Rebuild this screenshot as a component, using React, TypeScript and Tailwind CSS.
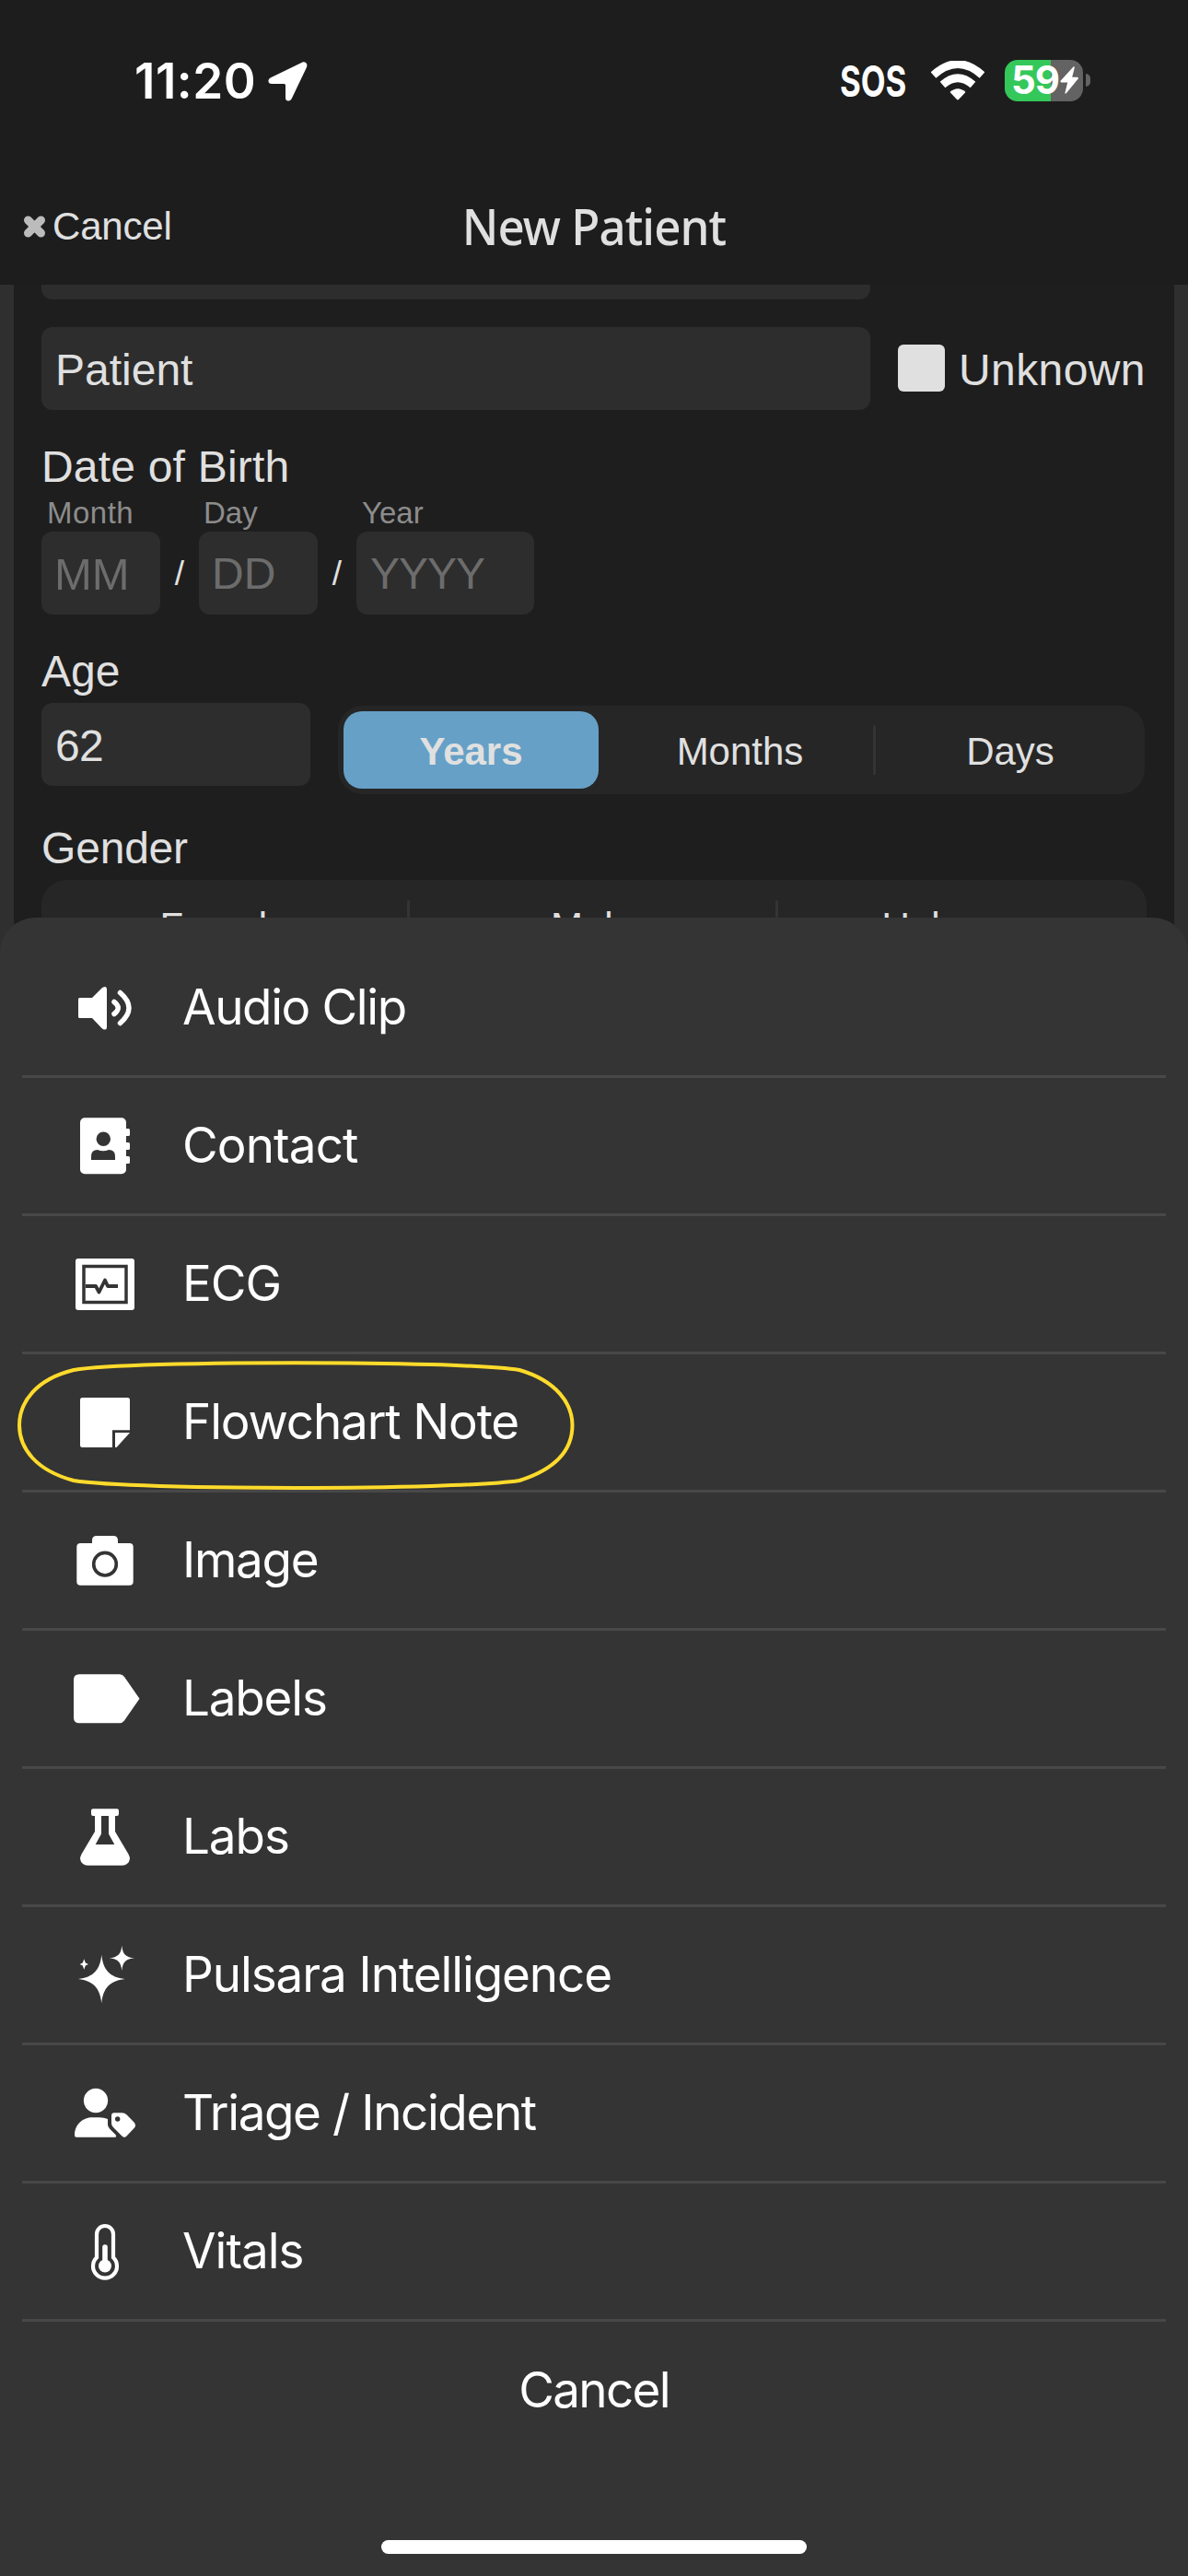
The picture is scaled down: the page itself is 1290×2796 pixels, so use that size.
import React from "react";

interface MenuItemProps {
  label: string;
  tracking: string;
  icon: React.ReactNode;
}

interface SegmentProps {
  label: string;
  active?: boolean;
  divider?: boolean;
}

const AudioIcon = () => (
  <>
    <path d="M12.5 28H26L36.500 17.5Q38 16 40 16Q42 16 42 18.5V60Q42 62.5 40 62.5Q38 62.5 36.5 61L26 50H12.5Q11 50 11 48.5V29.5Q11 28 12.5 28Z" />
    <path
      d="M50 32.500Q58.500 39 50 45.500M56.500 22.500Q75.500 39 56.500 55.500"
      fill="none"
      stroke="white"
      strokeWidth="5.5"
      strokeLinecap="round"
    />
  </>
);

const ContactIcon = () => (
  <>
    <rect x="13" y="8.3" width="50" height="61" rx="5" />
    <rect x="60" y="20" width="7" height="8" rx="1.5" />
    <rect x="60" y="35" width="7" height="8" rx="1.5" />
    <rect x="60" y="50" width="7" height="8" rx="1.5" />
    <circle cx="38.3" cy="31.3" r="7.7" fill="#343434" />
    <path d="M25 54V50Q25 43 32 43Q38 45.5 44 43Q51 43 51 50V54Z" fill="#343434" />
  </>
);

const EcgIcon = () => (
  <>
    <rect x="8" y="11" width="64" height="56" rx="3" />
    <rect x="17" y="19.5" width="46" height="39" fill="none" stroke="#343434" strokeWidth="3.5" />
    <path
      d="M19 41H30L33.5 47.5L40 34.5L43 41H54"
      fill="none"
      stroke="#343434"
      strokeWidth="3.8"
      strokeLinejoin="round"
    />
  </>
);

const NoteIcon = () => (
  <>
    <path d="M15.5 12H64.5Q67 12 67 14.5V47.3H48V66H15.5Q13 66 13 63.5V14.5Q13 12 15.5 12Z" />
    <path d="M51 50H67L53 65.5Q52 66 51 66Z" />
  </>
);

const CameraIcon = () => (
  <>
    <path d="M13.5 20H26V17Q26 12 31 12H49Q54 12 54 17V20H66.5Q70.7 20 70.7 24V61.7Q70.7 65.7 66.5 65.7H13.5Q9.3 65.7 9.3 61.7V24Q9.3 20 13.5 20Z" />
    <circle cx="40" cy="42.7" r="12.3" fill="none" stroke="#343434" strokeWidth="3.6" />
  </>
);

const LabelIcon = () => (
  <path d="M12 12.3H56Q59 12.3 61 15L77.5 38.8L61 62.6Q59 65.3 56 65.3H12Q6 65.3 6 59.3V18.3Q6 12.3 12 12.3Z" />
);

const LabsIcon = () => (
  <path
    fillRule="evenodd"
    d="M27 8.3H53Q55 8.3 55 10.3V14Q55 16 53 16H51V33L65.5 57.5Q69 64 64 68Q62 69.7 59 69.7H21Q18 69.7 16 68Q11 64 14.5 57.5L29 33V16H27Q25 16 25 14V10.3Q25 8.3 27 8.3ZM36 16V35.5L29.7 47H50.3L44 35.5V16Z"
  />
);

const SparkleIcon = () => (
  <>
    <path d="M36.3 16.7C38 33 45 41 61.7 43C45 45 38 53 36.3 69.3C34.6 53 27.5 45 11 43C27.5 41 34.6 33 36.3 16.7Z" />
    <path d="M58.3 6.7C59.2 16 62.5 19.4 72 20.3C62.5 21.2 59.2 24.6 58.3 34C57.4 24.6 54 21.2 44.7 20.3C54 19.4 57.4 16 58.3 6.7Z" />
    <path d="M17.3 21.2L18.8 25.5L22 27L18.8 28.5L17.3 32.8L15.8 28.5L12.6 27L15.8 25.5Z" />
  </>
);

const TriageIcon = () => (
  <>
    <circle cx="30" cy="25" r="13.2" />
    <path d="M9 64.7Q7 64.7 7 62.7C7 50 17 43.3 26 43.3H34Q39 43.3 43 45V51Q43 53.5 45 55.5L51.5 62Q53 64.7 51 64.7Z" />
    <path
      fillRule="evenodd"
      d="M50 38.3H58.5Q61.5 38.3 63.5 40.3L72 49Q74 52 72 54.5L63.5 63.5Q61 66 58.5 63.5L49 54Q47 52 47 49.5V41.3Q47 38.3 50 38.3ZM53.7 42.3A2.7 2.7 0 1 0 53.7 47.7A2.7 2.7 0 1 0 53.7 42.3Z"
    />
  </>
);

const VitalsIcon = () => (
  <>
    <path
      d="M31 20A9 9 0 0 1 49 20V45.3A13 13 0 1 1 31 45.3Z"
      fill="none"
      stroke="white"
      strokeWidth="4.2"
    />
    <path d="M40 34V54" stroke="white" strokeWidth="5.6" strokeLinecap="round" />
    <circle cx="40" cy="54.5" r="7" />
  </>
);

const menuItems: MenuItemProps[] = [
  { label: "Audio Clip", tracking: "tracking-[-1.4px]", icon: <AudioIcon /> },
  { label: "Contact", tracking: "tracking-[-0.9px]", icon: <ContactIcon /> },
  { label: "ECG", tracking: "tracking-[-1px]", icon: <EcgIcon /> },
  { label: "Flowchart Note", tracking: "tracking-[-1.15px]", icon: <NoteIcon /> },
  { label: "Image", tracking: "tracking-[-1.3px]", icon: <CameraIcon /> },
  { label: "Labels", tracking: "tracking-[-1.2px]", icon: <LabelIcon /> },
  { label: "Labs", tracking: "tracking-[-1.1px]", icon: <LabsIcon /> },
  { label: "Pulsara Intelligence", tracking: "tracking-[-1.1px]", icon: <SparkleIcon /> },
  { label: "Triage / Incident", tracking: "tracking-[-1.4px]", icon: <TriageIcon /> },
  { label: "Vitals", tracking: "tracking-[-1px]", icon: <VitalsIcon /> },
];

function MenuItem({ label, tracking, icon }: MenuItemProps) {
  return (
    <li className="flex h-[150px] items-center border-b-[3px] border-[#484848] pl-[50px]">
      <svg className="mt-[3px] h-20 w-20 shrink-0 fill-white" viewBox="0 0 80 80">
        {icon}
      </svg>
      <span className={`ml-11 text-[53px] leading-none ${tracking}`}>{label}</span>
    </li>
  );
}

function Segment({ label, active, divider }: SegmentProps) {
  return (
    <div className="flex h-full flex-1 items-center">
      <div
        className={
          active
            ? "ml-1.5 mr-[9px] flex h-[84px] flex-1 items-center justify-center rounded-[20px] bg-[#66a0c7] pt-1 font-bold"
            : "flex flex-1 justify-center pt-1"
        }
      >
        {label}
      </div>
      {divider && <div className="h-[54px] w-[3px] rounded-full bg-[#343434]" />}
    </div>
  );
}

function StatusBar() {
  return (
    <div className="flex h-[174px] items-center pl-[146px] pr-[106px] text-white">
      <span className="pt-0.5 text-[53px] font-semibold leading-none tracking-[0.5px]">11:20</span>
      <svg className="ml-[13px] mt-0.5 h-[43px] w-[43px] fill-white" viewBox="0 0 43 43">
        <path d="M36.5 1Q39 -.5 41.5 1.5Q43 3 42 6L25.5 40.5Q24 43 21.5 42.5Q19 42 19 39V25.5Q19 24 17.5 24H4Q1 24 .5 21.5Q0 19 2.5 17.5Z" />
      </svg>
      <div className="ml-auto flex items-center">
        <span className="w-[73px] origin-left scale-x-[0.74] text-[47px] font-bold leading-none">SOS</span>
        <svg className="ml-[26px] h-[43px] w-[58px]" viewBox="0 0 58 43">
          <path d="M2.5 15.5Q29 -8.5 55.5 15.5" fill="none" stroke="white" strokeWidth="8.5" />
          <path d="M12.5 26Q29 11.5 45.5 26" fill="none" stroke="white" strokeWidth="8.5" />
          <path d="M20.5 34Q29 26.5 37.5 34L30.2 41.8Q29 43 27.8 41.8Z" fill="white" />
        </svg>
        <div className="ml-[22px] flex h-[45px] w-[85px] items-center rounded-[14px] bg-[linear-gradient(90deg,#34c759_50px,#636363_50px)] pl-[7px]">
          <span className="w-[53px] text-[42px] font-bold leading-none tracking-[-1px]">59</span>
          <svg className="h-[30px] w-5 fill-white" viewBox="0 0 20 30">
            <path d="M14.5 .5Q16 -.3 15.8 1.5L13.2 11.8H18.8Q20.5 12 19.5 13.8L7 29Q5.3 30.5 5.5 28.5L8.2 17.5H1.5Q-.3 17.2 .8 15.5Z" />
          </svg>
        </div>
        <div className="ml-[3px] h-3.5 w-[5px] rounded-r-full bg-[#636363]" />
      </div>
    </div>
  );
}

function PatientForm() {
  return (
    <div className="mx-[15px] h-[700px] bg-[#1e1e1e] pl-[30px] pr-[30px] font-['Liberation_Sans',sans-serif] text-[48px] leading-none text-[#e0e0e0]">
      <div className="h-4 w-[900px] rounded-b-xl bg-[#2d2d2d]" />

      <div className="mt-[30px] flex h-[90px] items-center">
        <div className="flex h-full w-[900px] items-center rounded-xl bg-[#2d2d2d] pl-[15px] pt-1">Patient</div>
        <div className="mb-0.5 ml-[30px] h-[51px] w-[51px] rounded-md bg-[#e0e0e0]" />
        <span className="ml-[15px] pt-1 tracking-[0.4px]">Unknown</span>
      </div>

      <div className="mt-[38px] tracking-[0.2px]">Date of Birth</div>
      <div className="mt-[9px] flex text-[33px] text-[#8c8c8c]">
        <span className="w-[171px] pl-1.5 tracking-[0.5px]">Month</span>
        <span className="w-[171px] pl-[5px]">Day</span>
        <span className="pl-1.5">Year</span>
      </div>
      <div className="mt-1 flex h-[90px] items-center text-[#6c6c6c]">
        <div className="flex h-full w-[129px] items-center rounded-xl bg-[#2d2d2d] pl-[14px] pt-0.5 text-[49px]">MM</div>
        <span className="w-[42px] text-center text-[37px] text-[#e0e0e0]">/</span>
        <div className="flex h-full w-[129px] items-center rounded-xl bg-[#2d2d2d] pl-[14px] pt-0.5">DD</div>
        <span className="w-[42px] text-center text-[37px] text-[#e0e0e0]">/</span>
        <div className="flex h-full w-[193px] items-center rounded-xl bg-[#2d2d2d] pl-[15px] pt-0.5 tracking-[-1px]">
          YYYY
        </div>
      </div>

      <div className="mt-[38px]">Age</div>
      <div className="mt-[10px] flex">
        <div className="flex h-[90px] w-[292px] items-center rounded-xl bg-[#2d2d2d] pl-[15px] pt-1 tracking-[-0.8px]">
          62
        </div>
        <div className="ml-[30px] mt-[3px] flex h-24 w-[876px] rounded-[27px] bg-[#262626] text-[42px]">
          <Segment label="Years" active />
          <Segment label="Months" divider />
          <Segment label="Days" />
        </div>
      </div>

      <div className="mt-[35px] tracking-[-0.2px]">Gender</div>
      <div className="mt-[10px] flex h-24 w-[1200px] rounded-[27px] bg-[#262626] pt-px text-[42px]">
        <Segment label="Female" divider />
        <Segment label="Male" divider />
        <Segment label="Unknown" />
      </div>
    </div>
  );
}

export default function App() {
  return (
    <div className="relative h-[2796px] w-[1290px] overflow-hidden bg-[#2f2f2f] font-['Inter',sans-serif]">
      <header className="h-[309px] bg-[#1d1d1d]">
        <StatusBar />
        <div className="grid h-[135px] grid-cols-3 items-center pb-0.5 text-[#e0e0e0]">
          <div className="flex items-center pl-[25px] pt-2.5 font-['Liberation_Sans',sans-serif] text-[42px] leading-none tracking-[-0.2px]">
            <svg className="mr-[7px] h-6 w-[25px]" viewBox="0 0 25 24">
              <path
                d="M5.5 5L19.5 19M19.5 5L5.5 19"
                stroke="#bcbcbc"
                strokeWidth="9"
                strokeLinecap="round"
              />
            </svg>
            Cancel
          </div>
          <h1 className="scale-x-[0.945] whitespace-nowrap pt-2 text-center font-['Noto_Sans',sans-serif] text-[54px] font-medium leading-none tracking-[-1px]">
            New Patient
          </h1>
        </div>
      </header>

      <PatientForm />

      {/* Attachment sheet */}
      <div className="absolute inset-x-0 bottom-0 top-[996px] flex flex-col rounded-t-[38px] bg-[#343434] px-6 pt-6 text-white">
        <ul>
          {menuItems.map((item) => (
            <MenuItem key={item.label} {...item} />
          ))}
        </ul>
        <button className="h-[150px] pb-0.5 text-[53px] leading-none tracking-[-1.7px]">Cancel</button>
        <div className="mx-auto mt-[87px] h-[15px] w-[462px] shrink-0 rounded-full bg-white" />
      </div>

      {/* Highlight around Flowchart Note */}
      <svg className="absolute left-[15px] top-[1470px] h-[154px] w-[612px]" viewBox="0 0 612 154">
        <path
          d="M65 17C130 6.5 480 6.5 549 17C590 29 606.5 54 606.5 77C606.5 103 590 124 549 137C480 147.5 130 147.5 65 137C24 126 6 102 6 77C6 52 24 27 65 17Z"
          fill="none"
          stroke="#ffdb2b"
          strokeWidth="4"
        />
      </svg>
    </div>
  );
}
